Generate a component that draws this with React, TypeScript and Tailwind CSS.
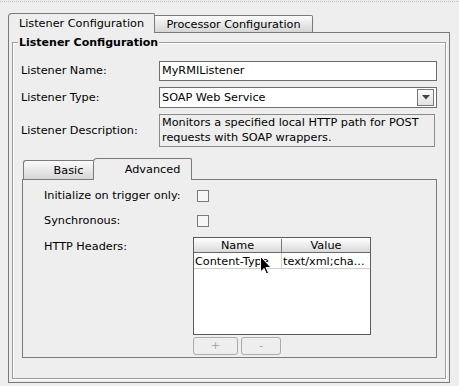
export default function App() {
  return (
    <div className="relative w-[459px] h-[386px] overflow-hidden bg-[#eeeeee] text-black font-['DejaVu_Sans',sans-serif] text-[11.25px] leading-[14px]">
      <div className="pt-[1px]">
        <div className="border-t border-dotted border-[#c4c4c4]" />
      </div>
      <div className="pl-[8px] pr-[9px] pt-[11px]">
        {/* outer tabs */}
        <div className="flex items-end h-[20px]">
          <div className="w-[147px] h-[20px] pt-[1px] border-l border-t border-r border-[#7a7a7a] rounded-tl-[4px] rounded-tr-[2px] bg-[#eeeeee] flex items-center justify-center">
            Listener Configuration
          </div>
          <div className="w-[158px] h-[18px] pt-[1px] border-t border-r border-b border-[#7a7a7a] rounded-tr-[2px] bg-linear-to-b from-[#fbfbfb] to-[#d6d6d6] flex items-center justify-center">
            Processor Configuration
          </div>
          <div className="flex-1 h-px bg-[#7a7a7a]" />
        </div>
        {/* outer panel */}
        <div className="h-[350px] border-l border-r border-b border-[#7a7a7a] pl-[3px] pr-[3px] pt-[9px] pb-[3px]">
          <div className="relative h-full border border-[#9c9c9c] shadow-[1px_1px_0_#ffffff,inset_1px_1px_0_#ffffff] pl-[8px] pr-[8px] pt-[18px]">
            <span className="absolute left-[5px] top-[-7px] px-[1px] bg-[#eeeeee] font-bold text-[11px] leading-[14px]">
              Listener Configuration
            </span>
            <div className="grid grid-cols-[138px_1fr] gap-y-[6px] items-center">
              <div>Listener Name:</div>
              <div className="h-[20px] border border-[#6e6e6e] bg-white pl-[2px] flex items-center">MyRMIListener</div>
              <div>Listener Type:</div>
              <div className="h-[21px] border border-[#6e6e6e] bg-white pl-[2px] pr-[2px] flex items-center">
                <span className="flex-1">SOAP Web Service</span>
                <div className="w-[17px] h-[17px] border border-[#7a7a7a] bg-linear-to-b from-[#fbfbfb] to-[#e2e2e2] flex items-center justify-center">
                  <svg width="8" height="5" viewBox="0 0 8 5">
                    <path d="M0 0 H8 L4 4.5 Z" fill="#444444" />
                  </svg>
                </div>
              </div>
              <div>Listener Description:</div>
              <div className="mr-[2px] h-[33px] border border-[#8a8a8a] bg-[#eeeeee] px-[2px] leading-[15px]">
                <div>Monitors a specified local HTTP path for POST</div>
                <div>requests with SOAP wrappers.</div>
              </div>
            </div>
            {/* inner tabs */}
            <div className="mt-[11px] ml-[1px]">
              <div className="flex items-end h-[22px]">
                <div className="w-[1px] h-px bg-[#7a7a7a]" />
                <div className="w-[70px] h-[20px] pl-[20px] pt-[1px] border-t border-l border-b border-[#7a7a7a] rounded-tl-[3px] bg-linear-to-b from-[#fbfbfb] to-[#d6d6d6] flex items-center justify-center">
                  Basic
                </div>
                <div className="w-[99px] h-[22px] pl-[20px] pt-[1px] border-l border-t border-r border-[#7a7a7a] rounded-tl-[4px] rounded-tr-[2px] bg-[#eeeeee] flex items-center justify-center">
                  Advanced
                </div>
                <div className="flex-1 h-px bg-[#7a7a7a]" />
              </div>
              <div className="h-[178px] border-l border-r border-b border-[#7a7a7a] pl-[21px] pt-[10px]">
                <div className="flex items-center h-[12px]">
                  <div className="w-[149px]">Initialize on trigger only:</div>
                  <div className="ml-[4px] w-[12px] h-[12px] border border-[#7b7b7b] bg-[#f6f6f6]" />
                </div>
                <div className="flex items-center h-[12px] mt-[13px]">
                  <div className="w-[149px]">Synchronous:</div>
                  <div className="ml-[4px] w-[12px] h-[12px] border border-[#7b7b7b] bg-[#f6f6f6]" />
                </div>
                <div className="flex items-start mt-[10px]">
                  <div className="w-[149px] pt-[3px]">HTTP Headers:</div>
                  <div className="flex flex-col">
                    <div className="w-[178px] h-[98px] border border-[#5c5c5c] bg-white flex flex-col">
                      <div className="flex h-[15px] border-b border-[#6a6a6a] bg-linear-to-b from-[#ffffff] to-[#dadada] leading-[14px] pt-[1px]">
                        <div className="w-[88px] border-r border-[#7a7a7a] text-center">Name</div>
                        <div className="flex-1 text-center">Value</div>
                      </div>
                      <div className="flex h-[16px] border-b border-[#cfcfcf] leading-[15px]">
                        <div className="w-[88px] border-r border-[#cfcfcf] pl-[1px] pt-[1px] whitespace-nowrap overflow-hidden">Content-Type</div>
                        <div className="flex-1 pl-[1px] pt-[1px] whitespace-nowrap overflow-hidden">text/xml;cha...</div>
                      </div>
                    </div>
                    <div className="flex gap-[3px] mt-[2px]">
                      <div className="w-[45px] h-[18px] rounded-[3px] border border-[#ababab] text-[#a8a8a8] flex items-center justify-center">+</div>
                      <div className="w-[40px] h-[18px] rounded-[3px] border border-[#ababab] text-[#a8a8a8] flex items-center justify-center">-</div>
                    </div>
                  </div>
                </div>
              </div>
            </div>
          </div>
        </div>
      </div>
      {/* mouse cursor */}
      <svg className="absolute left-[260px] top-[256px]" width="12" height="19" viewBox="0 0 12 19">
        <path d="M0.5 0.5 V16 L4 12.5 L6.5 18 L8.5 17 L6 11.5 H11 Z" fill="#000000" stroke="#ffffff" strokeWidth="1" />
      </svg>
    </div>
  );
}
